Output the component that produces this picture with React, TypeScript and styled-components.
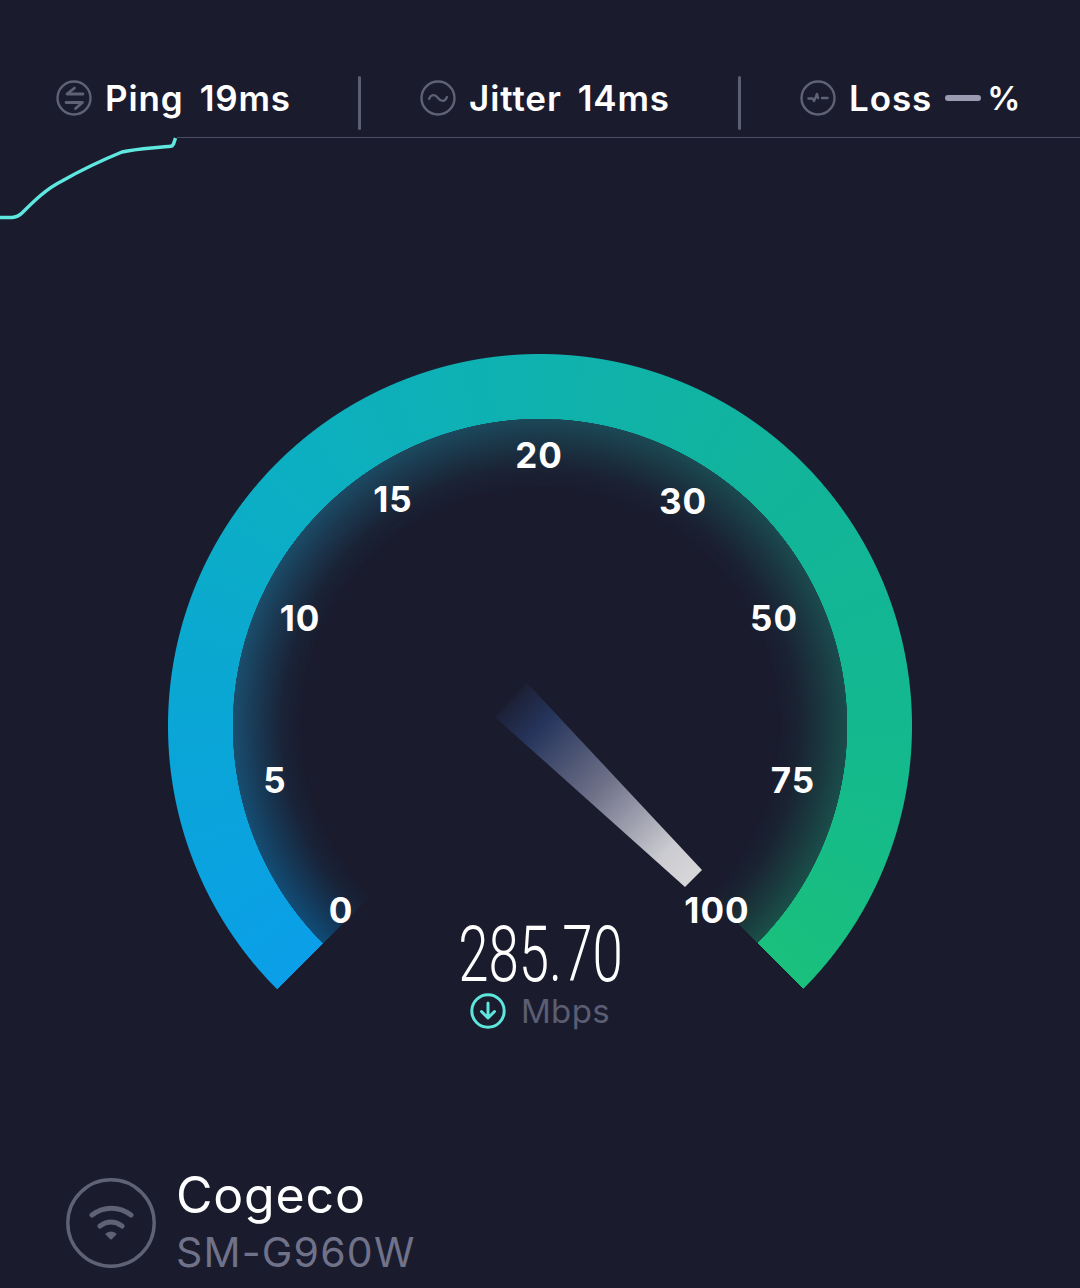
import React from 'react';
import styled, { createGlobalStyle } from 'styled-components';

const GlobalStyle = createGlobalStyle`
  html, body {
    margin: 0;
    padding: 0;
    background: #1a1c2e;
  }
  body {
    font-family: Inter, "Noto Sans", sans-serif;
    color: #fff;
  }
`;

const Page = styled.div`
  width: 1080px;
  height: 1288px;
  overflow: hidden;
  background: #1a1c2e;
`;

const TopBar = styled.div`
  display: flex;
  align-items: flex-start;
  height: 137px;
  box-sizing: border-box;
  padding-top: 76px;
`;

const Stat = styled.div<{ $width: number; $pad: number }>`
  display: flex;
  align-items: center;
  flex: none;
  width: ${p => p.$width}px;
  height: 44px;
  box-sizing: border-box;
  padding-left: ${p => p.$pad}px;
`;

const StatLabel = styled.span`
  font-size: 35px;
  font-weight: 600;
  letter-spacing: 0.9px;
  margin-left: 13px;
`;

const StatValue = styled.span`
  font-size: 35px;
  font-weight: 600;
  letter-spacing: 0.8px;
  margin-left: 16px;
`;

const Divider = styled.div`
  flex: none;
  width: 3px;
  height: 54px;
  margin-left: -1px;
  margin-right: -2px;
  border-radius: 2px;
  background: #5c5e72;
`;

const Dash = styled.div`
  width: 36px;
  height: 6px;
  border-radius: 3px;
  margin-left: 13px;
  background: #9a9bb2;
`;

const Percent = styled.span`
  font-size: 33px;
  font-weight: 600;
  margin-left: 6px;
`;

const GraphRow = styled.div`
  display: flex;
  align-items: flex-start;
  height: 84px;
`;

const Rule = styled.div`
  flex: 1;
  height: 1px;
  background: #4b4d62;
`;

const Gauge = styled.div`
  position: relative;
  width: 744px;
  height: 744px;
  margin: 133px auto 0;
`;

const sweep = (stops: string) =>
  `conic-gradient(from 225deg, ${stops}, transparent 270deg, transparent 360deg)`;

const Ring = styled.div`
  position: absolute;
  inset: 0;
  background: ${sweep(
    '#0a9fe8 0deg, #0aa6d6 45deg, #0cafc2 90deg, #0fb2ae 135deg, #12b49a 180deg, #13b88f 225deg, #1ac07c 270deg'
  )};
  mask-image: radial-gradient(circle at center, transparent 306.5px, #000 307.5px, #000 371.5px, transparent 372.5px);
`;

const Glow = styled.div`
  position: absolute;
  inset: 0;
  background: ${sweep(
    '#0f4c78 0deg, #1a4f70 45deg, #1c4b66 90deg, #1c4858 135deg, #1b4a50 180deg, #1b4c4c 225deg, #1a5048 270deg'
  )};
  mask-image: radial-gradient(circle at center, transparent 238px, rgba(0, 0, 0, 0.15) 258px, rgba(0, 0, 0, 0.6) 285px, #000 307px, transparent 307.5px);
`;

const Needle = styled.svg`
  position: absolute;
  inset: 0;
`;

const Tick = styled.span<{ $x: number; $y: number }>`
  position: absolute;
  left: ${p => p.$x - 168}px;
  top: ${p => p.$y - 354}px;
  transform: translate(-50%, -50%);
  font-size: 35px;
  line-height: 1;
  font-weight: 700;
  letter-spacing: 1px;
  color: #fff;
`;

const Readout = styled.div`
  position: absolute;
  left: 0;
  right: 0;
  top: 567px;
  display: flex;
  flex-direction: column;
  align-items: center;
`;

const Speed = styled.div`
  font-family: Roboto, sans-serif;
  font-weight: 300;
  font-size: 78px;
  line-height: 68px;
  color: #fff;
  transform: scaleX(0.7);
`;

const UnitRow = styled.div`
  display: flex;
  align-items: center;
  gap: 15px;
  margin-top: 2px;
`;

const Unit = styled.span`
  font-size: 33px;
  line-height: 40px;
  font-weight: 400;
  letter-spacing: 0.4px;
  color: #5b5d72;
`;

const Network = styled.div`
  display: flex;
  align-items: center;
  gap: 20px;
  padding-left: 66px;
  margin-top: 68px;
`;

const NetworkText = styled.div`
  display: flex;
  flex-direction: column;
`;

const Provider = styled.div`
  font-size: 50px;
  line-height: 58px;
  font-weight: 400;
  letter-spacing: 0.8px;
  color: #fff;
`;

const Device = styled.div`
  font-size: 41px;
  line-height: 56px;
  font-weight: 400;
  letter-spacing: 1.2px;
  color: #70728a;
`;

const ICON = '#5f6175';

const PingIcon = () => (
  <svg width="36" height="36" viewBox="0 0 36 36" fill="none" stroke={ICON} strokeLinecap="round" strokeLinejoin="round">
    <circle cx="18" cy="18" r="16.5" strokeWidth="2.4" />
    <path d="M27 14H11l7.500-6" strokeWidth="2.8" />
    <path d="M10 22.500h16.500l-7 6" strokeWidth="2.8" />
  </svg>
);

const JitterIcon = () => (
  <svg width="36" height="36" viewBox="0 0 36 36" fill="none" stroke={ICON} strokeLinecap="round">
    <circle cx="18" cy="18" r="16.5" strokeWidth="2.4" />
    <path d="M9 19c2-5 6-5 9-1s7 4 9-1" strokeWidth="2.2" />
  </svg>
);

const LossIcon = () => (
  <svg width="36" height="36" viewBox="0 0 36 36" fill="none" stroke={ICON} strokeLinecap="round" strokeLinejoin="round">
    <circle cx="18" cy="18" r="16.5" strokeWidth="2.4" />
    <path d="M8.500 18.500h4l1.500 2.500 3-7 1 4" strokeWidth="2.4" />
    <path d="M22 18h5.500" strokeWidth="2.4" />
  </svg>
);

const DownIcon = () => (
  <svg width="36" height="36" viewBox="0 0 36 36" fill="none" stroke="#5ee6dc" strokeLinecap="round" strokeLinejoin="round">
    <circle cx="18" cy="18" r="16.2" strokeWidth="3" />
    <path d="M18 10v15M11.500 18.500l6.500 6.500 6.500-6.500" strokeWidth="3" />
  </svg>
);

const WifiIcon = () => (
  <svg width="90" height="90" viewBox="0 0 90 90" fill="none" stroke="#5f6175">
    <circle cx="45" cy="45" r="43.2" strokeWidth="3.4" />
    <path d="M26 37c12-9 27-9 39 0" strokeWidth="5" strokeLinecap="round" />
    <path d="M34 48c7-5 15-5 22 0" strokeWidth="5" strokeLinecap="round" />
    <path d="M40.500 56c3-2 6-2 9 0L45 60.500z" fill="#5f6175" strokeWidth="2" strokeLinejoin="round" />
  </svg>
);

const ticks = [
  { label: '0', x: 341, y: 910 },
  { label: '5', x: 275, y: 780 },
  { label: '10', x: 300, y: 618 },
  { label: '15', x: 393, y: 499 },
  { label: '20', x: 539, y: 455 },
  { label: '30', x: 683, y: 501 },
  { label: '50', x: 774, y: 618 },
  { label: '75', x: 793, y: 780 },
  { label: '100', x: 717, y: 910 },
];

const App = () => (
  <Page>
    <GlobalStyle />
    <TopBar>
      <Stat $width={359} $pad={56}>
        <PingIcon />
        <StatLabel>Ping</StatLabel>
        <StatValue>19ms</StatValue>
      </Stat>
      <Divider />
      <Stat $width={380} $pad={61}>
        <JitterIcon />
        <StatLabel>Jitter</StatLabel>
        <StatValue>14ms</StatValue>
      </Stat>
      <Divider />
      <Stat $width={340} $pad={61}>
        <LossIcon />
        <StatLabel>Loss</StatLabel>
        <Dash />
        <Percent>%</Percent>
      </Stat>
    </TopBar>

    <GraphRow>
      <svg width="177" height="84" viewBox="0 0 177 84" fill="none">
        <path
          d="M0 80.500 H12 Q18 80 22 76 C34 64 46 52 62 44 C76 36 100 24 122 15 C136 12 156 11 172 9 L173.500 7 L175.500 1"
          stroke="#5ee8e0"
          strokeWidth="3.5"
          strokeLinejoin="round"
        />
      </svg>
      <Rule />
    </GraphRow>

    <Gauge>
      <Ring />
      <Glow />
      <Needle width="744" height="744" viewBox="168 354 744 744">
        <defs>
          <linearGradient id="needleFill" gradientUnits="userSpaceOnUse" x1="505" y1="695" x2="695" y2="880">
            <stop offset="0" stopColor="#1a1c2e" />
            <stop offset="0.18" stopColor="#26355c" />
            <stop offset="0.5" stopColor="#6e7088" />
            <stop offset="0.85" stopColor="#cbcbd1" />
            <stop offset="1" stopColor="#d8d8da" />
          </linearGradient>
        </defs>
        <polygon points="527,683 495,717 685,887 702,870" fill="url(#needleFill)" />
      </Needle>
      {ticks.map(t => (
        <Tick key={t.label} $x={t.x} $y={t.y}>
          {t.label}
        </Tick>
      ))}
      <Readout>
        <Speed>285.70</Speed>
        <UnitRow>
          <DownIcon />
          <Unit>Mbps</Unit>
        </UnitRow>
      </Readout>
    </Gauge>

    <Network>
      <WifiIcon />
      <NetworkText>
        <Provider>Cogeco</Provider>
        <Device>SM-G960W</Device>
      </NetworkText>
    </Network>
  </Page>
);

export default App;
